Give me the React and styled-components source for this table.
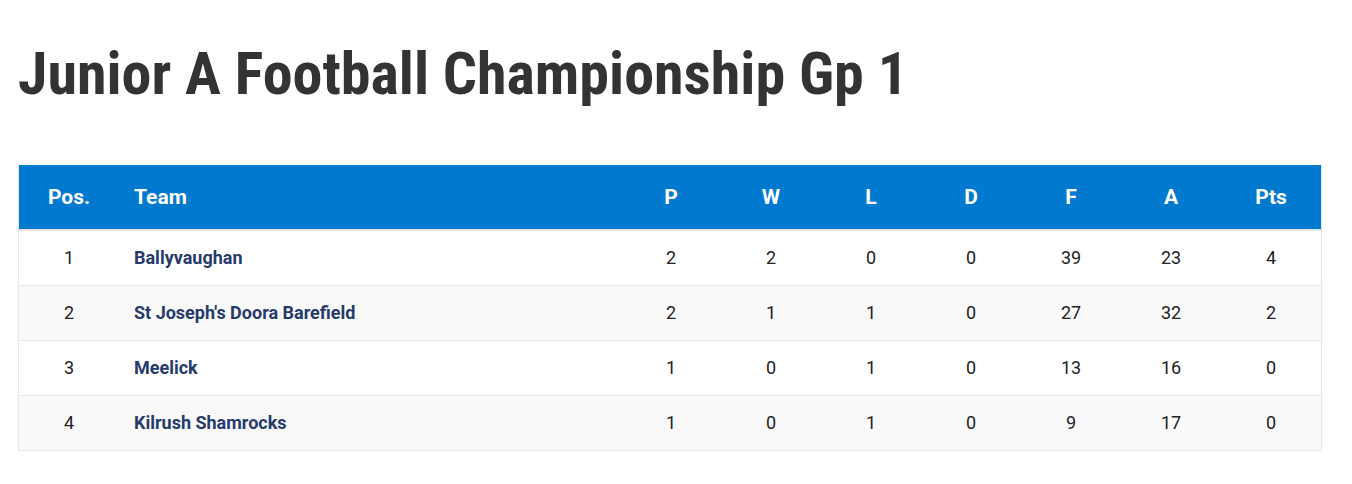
import React from 'react';
import styled, { createGlobalStyle } from 'styled-components';

const GlobalStyle = createGlobalStyle`
  body {
    margin: 0;
    background: #fff;
    font-family: Roboto, "Noto Sans", sans-serif;
  }
`;

const Page = styled.div`
  padding: 27px 30px 0 18px;
`;

const Title = styled.h1`
  margin: 0 0 44px 0;
  font-family: "Roboto Condensed", "Liberation Sans Narrow", Roboto, sans-serif;
  font-stretch: condensed;
  font-weight: 700;
  font-size: 60px;
  line-height: 94px;
  color: #333;
`;

const Table = styled.table`
  width: 1304px;
  border-collapse: collapse;
  border: 1px solid #e8e8e8;
  border-top: none;
`;

const HeadRow = styled.tr`
  background: #0079cf;
  border-bottom: 2px solid #e6e6e6;
`;

const Th = styled.th`
  height: 64px;
  padding: 0 ${(p) => (p.$left ? '15px' : '0')};
  width: ${(p) => p.$w || 'auto'};
  text-align: ${(p) => (p.$left ? 'left' : 'center')};
  color: #fff;
  font-size: 21px;
  font-weight: 700;
`;

const Row = styled.tr`
  background: ${(p) => (p.$alt ? '#f9f9f9' : '#fff')};
  border-bottom: 1px solid #e8e8e8;
`;

const Td = styled.td`
  height: 52px;
  padding: 0 ${(p) => (p.$left ? '15px' : '0')} 2px;
  text-align: ${(p) => (p.$left ? 'left' : 'center')};
  font-size: 18px;
  color: #222;
`;

const TeamName = styled.span`
  font-weight: 700;
  color: #263b6b;
`;

const rows = [
  ['1', 'Ballyvaughan', 2, 2, 0, 0, 39, 23, 4],
  ['2', "St Joseph's Doora Barefield", 2, 1, 1, 0, 27, 32, 2],
  ['3', 'Meelick', 1, 0, 1, 0, 13, 16, 0],
  ['4', 'Kilrush Shamrocks', 1, 0, 1, 0, 9, 17, 0],
];

const cols = ['P', 'W', 'L', 'D', 'F', 'A', 'Pts'];

export default function App() {
  return (
    <>
      <GlobalStyle />
      <Page>
        <Title>Junior A Football Championship Gp 1</Title>
        <Table>
          <thead>
            <HeadRow>
              <Th $w="100px">Pos.</Th>
              <Th $left>Team</Th>
              {cols.map((c) => (
                <Th key={c} $w="100px">{c}</Th>
              ))}
            </HeadRow>
          </thead>
          <tbody>
            {rows.map((r, i) => (
              <Row key={r[0]} $alt={i % 2 === 1}>
                <Td>{r[0]}</Td>
                <Td $left><TeamName>{r[1]}</TeamName></Td>
                {r.slice(2).map((v, j) => (
                  <Td key={j}>{v}</Td>
                ))}
              </Row>
            ))}
          </tbody>
        </Table>
      </Page>
    </>
  );
}
